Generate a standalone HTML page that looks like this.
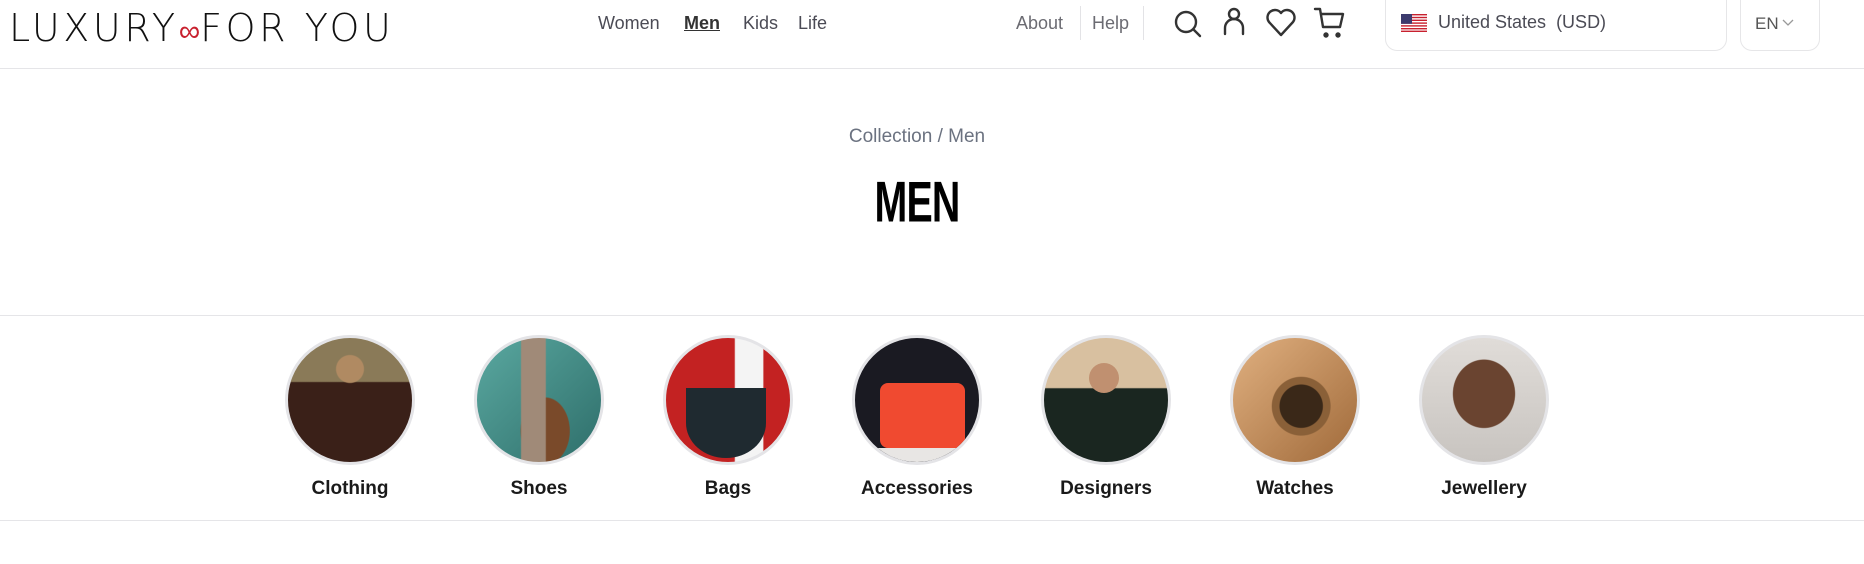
<!DOCTYPE html>
<html><head><meta charset="utf-8"><style>
*{margin:0;padding:0;box-sizing:border-box}
body{width:1864px;height:564px;background:#fff;font-family:"Liberation Sans",sans-serif;position:relative;overflow:hidden;color:#111}
.a{position:absolute;white-space:nowrap}
.logo{left:9px;top:6px;font-size:38px;letter-spacing:3.6px;color:#111;font-family:"DejaVu Sans","Liberation Sans",sans-serif;font-weight:200}
.nav{top:13px;font-size:18px;color:#4b4b55}
.sep{position:absolute;top:6px;width:1px;height:34px;background:#e3e3e6}
.hr{position:absolute;left:0;width:1864px;height:1px;background:#e5e5e8}
.box{position:absolute;border:1px solid #e6e6e8;border-radius:12px;top:-12px;height:63px}
.c{position:absolute;top:335px;width:130px;height:130px;border-radius:50%;border:3px solid #e4e4e7;overflow:hidden}
.l{position:absolute;top:478px;width:200px;text-align:center;font-size:19px;font-weight:bold;color:#1a1a1a}
</style></head><body>
<div class="a logo">LUXURY<span style="color:#c8202e;font-size:30px;letter-spacing:0">∞</span>FOR YOU</div>
<div class="a nav" style="left:598px">Women</div>
<div class="a nav" style="left:684px;font-weight:bold;text-decoration:underline;color:#333">Men</div>
<div class="a nav" style="left:743px">Kids</div>
<div class="a nav" style="left:798px">Life</div>
<div class="a nav" style="left:1016px;color:#6b6b72">About</div>
<div class="sep" style="left:1080px"></div>
<div class="a nav" style="left:1092px;color:#6b6b72">Help</div>
<div class="sep" style="left:1143px"></div>
<svg class="a" style="left:1172px;top:8px" width="32" height="32" viewBox="0 0 32 32" fill="none" stroke="#333" stroke-width="2.4" stroke-linecap="round"><circle cx="14" cy="14" r="10"/><path d="M21.5 21.5L28 28"/></svg>
<svg class="a" style="left:1220px;top:6px" width="28" height="32" viewBox="0 0 28 32" fill="none" stroke="#333" stroke-width="2.4" stroke-linecap="round"><circle cx="14" cy="8" r="5"/><path d="M5 28v-6a9 9 0 0 1 18 0v6"/></svg>
<svg class="a" style="left:1265px;top:8px" width="32" height="30" viewBox="0 0 32 30" fill="none" stroke="#333" stroke-width="2.4" stroke-linejoin="round"><path d="M16 27L4 14A7 7 0 0 1 16 5a7 7 0 0 1 12 9z"/></svg>
<svg class="a" style="left:1313px;top:6px" width="34" height="34" viewBox="0 0 34 34" fill="none" stroke="#333" stroke-width="2.4" stroke-linecap="round" stroke-linejoin="round"><path d="M2 3h5l3 18h17l3-13H9"/><circle cx="13" cy="29" r="1.5" fill="#333"/><circle cx="25" cy="29" r="1.5" fill="#333"/></svg>
<div class="box" style="left:1385px;width:342px"></div>
<svg class="a" style="left:1401px;top:14px" width="26" height="18" viewBox="0 0 26 18"><rect width="26" height="18" fill="#fff"/><g fill="#c8202e"><rect y="0" width="26" height="1.4"/><rect y="2.8" width="26" height="1.4"/><rect y="5.6" width="26" height="1.4"/><rect y="8.4" width="26" height="1.4"/><rect y="11.2" width="26" height="1.4"/><rect y="14" width="26" height="1.4"/><rect y="16.6" width="26" height="1.4"/></g><rect width="11" height="9.8" fill="#3c3b6e"/></svg>
<div class="a" style="left:1438px;top:12px;font-size:18px;color:#4b4b55">United States&nbsp;&nbsp;(USD)</div>
<div class="box" style="left:1740px;width:80px"></div>
<div class="a" style="left:1755px;top:14px;font-size:17px;color:#555">EN</div>
<svg class="a" style="left:1781px;top:18px" width="14" height="10" viewBox="0 0 14 10" fill="none" stroke="#999" stroke-width="1.3"><path d="M2 2l5 5 5-5"/></svg>
<div class="hr" style="top:68px"></div>
<div class="a" style="left:0;width:1834px;text-align:center;top:126px;font-size:19px;color:#6b7280">Collection / Men</div>
<div class="a" style="left:0;width:1834px;text-align:center;top:170px;font-size:48px;font-weight:bold;color:#000;transform:scale(0.82,1.2);transform-origin:917px 0;letter-spacing:-1px">MEN</div>
<div class="hr" style="top:315px"></div>
<div class="c" style="left:285px;background:radial-gradient(circle at 50% 25%,#b08a62 0 12%,transparent 13%),linear-gradient(180deg,#8a7a58 0 35%,#3a2018 36% 100%)"></div>
<div class="c" style="left:474px;background:linear-gradient(90deg,transparent 35%,#a08a78 36% 55%,transparent 56%),radial-gradient(ellipse at 55% 75%,#7a4a2a 0 25%,transparent 26%),linear-gradient(135deg,#5aa8a0,#2e6e6a)"></div>
<div class="c" style="left:663px;background:linear-gradient(90deg,#c32222 0 55%,#f4f4f4 56% 78%,#c32222 79%)"><div style="position:absolute;left:20px;top:50px;width:80px;height:70px;background:#1f2a30;border-radius:0 0 50% 50%"></div></div>
<div class="c" style="left:852px;background:#1a1a22"><div style="position:absolute;left:25px;top:45px;width:85px;height:65px;background:#f04a30;border-radius:8px"></div><div style="position:absolute;left:0;top:110px;width:130px;height:25px;background:#e8e6e4"></div></div>
<div class="c" style="left:1041px;background:linear-gradient(180deg,#d8c0a0 0 40%,#1a2620 41%)"><div style="position:absolute;left:45px;top:25px;width:30px;height:30px;border-radius:50%;background:#c09070"></div></div>
<div class="c" style="left:1230px;background:radial-gradient(circle at 55% 55%,#3a2818 0 22%,#8a6038 23% 30%,transparent 31%),linear-gradient(135deg,#e0b080,#a06a3a)"></div>
<div class="c" style="left:1419px;background:radial-gradient(ellipse at 50% 45%,#6a4430 0 35%,transparent 36%),linear-gradient(180deg,#e0dcd8,#c8c4c0)"></div>
<div class="l" style="left:250px">Clothing</div>
<div class="l" style="left:439px">Shoes</div>
<div class="l" style="left:628px">Bags</div>
<div class="l" style="left:817px">Accessories</div>
<div class="l" style="left:1006px">Designers</div>
<div class="l" style="left:1195px">Watches</div>
<div class="l" style="left:1384px">Jewellery</div>
<div class="hr" style="top:520px"></div>
</body></html>
